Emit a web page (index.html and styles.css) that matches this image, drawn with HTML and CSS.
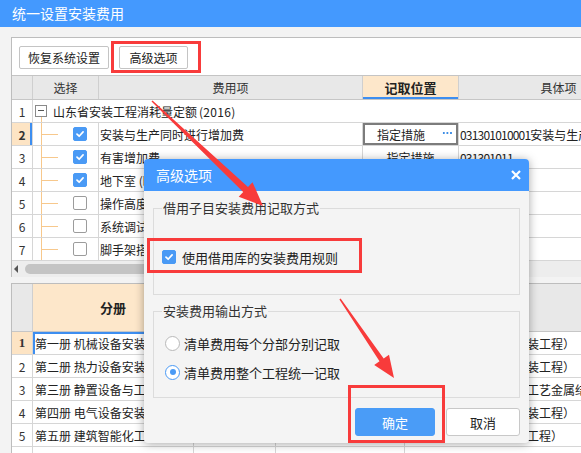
FILE: index.html
```html
<!DOCTYPE html>
<html lang="zh-CN">
<head>
<meta charset="utf-8">
<title>统一设置安装费用</title>
<link rel="stylesheet" href="styles.css">
</head>
<body>
<div class="window">
  <div class="titlebar">统一设置安装费用</div>
  <div class="content">
    <section class="panel">
      <div class="toolbar">
        <button class="btn btn-reset">恢复系统设置</button>
        <button class="btn btn-adv">高级选项</button>
      </div>
      <div class="upper">
        <div class="row head">
          <div class="cell num"></div>
          <div class="cell">选择</div>
          <div class="cell">费用项</div>
          <div class="cell active-head">记取位置</div>
          <div class="cell">具体项</div>
        </div>
        <div class="row">
          <div class="cell num">1</div>
          <div class="cell span"><span class="toggle"></span>山东省安装工程消耗量定额<span class="year">(2016)</span></div>
        </div>
        <div class="row">
          <div class="cell num cur">2</div>
          <div class="cell tree"><span class="chk on"><svg viewBox="0 0 14 14"><polyline points="3.5,7.2 6,9.6 10.6,4.6"/></svg></span></div>
          <div class="cell name">安装与生产同时进行增加费</div>
          <div class="cell pos editing"><span class="pos-text">指定措施</span><span class="dots"></span></div>
          <div class="cell code"><span class="digits">031301010001</span>安装与生产同时进行增加费</div>
        </div>
        <div class="row">
          <div class="cell num">3</div>
          <div class="cell tree"><span class="chk on"><svg viewBox="0 0 14 14"><polyline points="3.5,7.2 6,9.6 10.6,4.6"/></svg></span></div>
          <div class="cell name">有害增加费</div>
          <div class="cell pos center">指定措施</div>
          <div class="cell code"><span class="digits">031301011</span></div>
        </div>
        <div class="row">
          <div class="cell num">4</div>
          <div class="cell tree"><span class="chk on"><svg viewBox="0 0 14 14"><polyline points="3.5,7.2 6,9.6 10.6,4.6"/></svg></span></div>
          <div class="cell name">地下室 (暗室) 施工增加费</div>
          <div class="cell pos center">指定措施</div>
          <div class="cell code"><span class="digits">031301012</span></div>
        </div>
        <div class="row">
          <div class="cell num">5</div>
          <div class="cell tree"><span class="chk"></span></div>
          <div class="cell name">操作高度增加费</div>
          <div class="cell pos center"></div>
          <div class="cell code"></div>
        </div>
        <div class="row">
          <div class="cell num">6</div>
          <div class="cell tree"><span class="chk"></span></div>
          <div class="cell name">系统调试费</div>
          <div class="cell pos center"></div>
          <div class="cell code"></div>
        </div>
        <div class="row">
          <div class="cell num">7</div>
          <div class="cell tree"><span class="chk"></span></div>
          <div class="cell name">脚手架搭拆费</div>
          <div class="cell pos center"></div>
          <div class="cell code"></div>
        </div>
      </div>
      <div class="hscroll">
        <span class="arrow-left"></span>
        <span class="thumb"></span>
      </div>
    </section>

    <section class="lower">
      <div class="row head">
        <div class="cell num"></div>
        <div class="cell active-head2">分册</div>
        <div class="cell"></div>
        <div class="cell"></div>
        <div class="cell"></div>
      </div>
      <div class="row">
        <div class="cell num cur2">1</div>
        <div class="cell book selected">第一册 机械设备安装工程</div>
        <div class="cell"></div>
        <div class="cell"></div>
        <div class="cell book2">安装工程（机械设备安装工程）</div>
      </div>
      <div class="row">
        <div class="cell num">2</div>
        <div class="cell book">第二册 热力设备安装工程</div>
        <div class="cell"></div>
        <div class="cell"></div>
        <div class="cell book2">安装工程（热力设备安装工程）</div>
      </div>
      <div class="row">
        <div class="cell num">3</div>
        <div class="cell book">第三册 静置设备与工艺金属结构制作安装工程</div>
        <div class="cell"></div>
        <div class="cell"></div>
        <div class="cell book2">安装工程（静置设备与工艺金属结构制作安装工程）</div>
      </div>
      <div class="row">
        <div class="cell num">4</div>
        <div class="cell book">第四册 电气设备安装工程</div>
        <div class="cell"></div>
        <div class="cell"></div>
        <div class="cell book2">安装工程（电气设备安装工程）</div>
      </div>
      <div class="row">
        <div class="cell num">5</div>
        <div class="cell book">第五册 建筑智能化工程</div>
        <div class="cell"></div>
        <div class="cell"></div>
        <div class="cell book2">安装工程（建筑智能化工程）</div>
      </div>
      <div class="row">
        <div class="cell num"></div>
        <div class="cell"></div>
        <div class="cell"></div>
        <div class="cell"></div>
        <div class="cell"></div>
      </div>
    </section>
  </div>

  <div class="dialog">
    <div class="dlg-head">
      <span>高级选项</span>
      <svg class="close" viewBox="0 0 10 10"><path d="M1 1L9 9M9 1L1 9"/></svg>
    </div>
    <div class="dlg-body">
      <fieldset class="group g1">
        <legend>借用子目安装费用记取方式</legend>
        <label class="opt opt-chk"><span class="chk on"><svg viewBox="0 0 14 14"><polyline points="3.5,7.2 6,9.6 10.6,4.6"/></svg></span>使用借用库的安装费用规则</label>
      </fieldset>
      <fieldset class="group g2">
        <legend>安装费用输出方式</legend>
        <label class="opt opt-r1"><span class="radio"></span>清单费用每个分部分别记取</label>
        <label class="opt opt-r2"><span class="radio on"></span>清单费用整个工程统一记取</label>
      </fieldset>
      <div class="actions">
        <button class="dbtn ok">确定</button>
        <button class="dbtn cancel">取消</button>
      </div>
    </div>
  </div>

  <svg class="annot" viewBox="0 0 581 453" width="581" height="453">
    <g fill="none" stroke="#f83b3b" stroke-width="3">
      <rect x="112.5" y="42.5" width="87" height="29"/>
      <rect x="148.5" y="239.5" width="212" height="32"/>
      <rect x="349.5" y="386.5" width="94" height="55"/>
    </g>
    <g fill="#f83b3b">
      <polygon points="152.5,100.4 248,187 252.5,182.2 263,206 238.7,196.8 243.2,192 151.5,101.6"/>
      <polygon points="340.6,298.6 383.7,358.4 389,354.8 394,378 374.2,364.9 379.5,361.3 339.4,299.4"/>
    </g>
  </svg>
</div>
</body>
</html>
```

FILE: styles.css
```css
* { box-sizing: border-box; }
html, body { margin: 0; padding: 0; }
body {
  width: 581px;
  height: 453px;
  overflow: hidden;
  background: #f3f3f3;
  font-family: "Noto Sans CJK SC", "Noto Sans", sans-serif;
  font-size: 12px;
  color: #222;
}
.window { position: relative; width: 581px; height: 453px; }

.titlebar {
  height: 27px;
  background: #4499fe;
  color: #fff;
  font-size: 14px;
  line-height: 27px;
  padding-left: 12px;
}
.content { padding: 10px 0 0 11px; }

.panel {
  background: #fff;
  border-top: 1px solid #bdbdbd;
  border-left: 1px solid #bdbdbd;
  overflow: hidden;
}
.toolbar {
  height: 38px;
  border-bottom: 1px solid #c4c4c4;
  display: flex;
  align-items: flex-start;
  gap: 10px;
  padding: 8px 0 0 7px;
}
.btn {
  height: 23px;
  padding: 0;
  border: 1px solid #c4c4c4;
  border-radius: 2px;
  background: #fff;
  font: inherit;
  font-size: 12px;
  color: #222;
}
.btn-reset { width: 90px; }
.btn-adv { width: 69px; }

.row { display: grid; height: 23px; border-bottom: 1px solid #d6d6d6; }
.upper .row { grid-template-columns: 21px 66px 264px 96px 200px; }
.cell {
  position: relative;
  display: flex;
  align-items: center;
  border-right: 1px solid #d6d6d6;
  overflow: hidden;
  white-space: nowrap;
}
.head { height: 24px; background: #e8e8e8; border-bottom-color: #c6c6c6; }
.head .cell { justify-content: center; border-right-color: #cfcfcf; color: #333; }
.active-head {
  background: #fde7ca;
  font-weight: bold;
  font-size: 13px;
  color: #222 !important;
  box-shadow: inset 0 -2px 0 #3d8ef0;
}
.num { justify-content: center; color: #333; }
.cur { background: #fde4c4; font-weight: bold; box-shadow: inset -2px 0 0 #3d8ef0; }
.span { grid-column: 2 / -1; border-right: none; padding-left: 2px; }
.year { margin-left: 2px; letter-spacing: 0.3px; }
.digits { letter-spacing: -0.8px; }
.toggle {
  position: relative;
  width: 12px;
  height: 12px;
  border: 1px solid #8a8a8a;
  margin-right: 6px;
  flex: none;
}
.toggle::before {
  content: "";
  position: absolute;
  left: 2px;
  right: 2px;
  top: 4px;
  height: 1px;
  background: #555;
}
.toggle::after {
  content: "";
  position: absolute;
  left: 5px;
  top: 11px;
  width: 1px;
  height: 7px;
  background: #f7c88c;
}
.tree { padding-left: 40px; }
.tree::before {
  content: "";
  position: absolute;
  left: 8px;
  top: 0;
  bottom: 0;
  width: 1px;
  background: #f7c88c;
}
.tree::after {
  content: "";
  position: absolute;
  left: 8px;
  top: 11px;
  width: 17px;
  height: 1px;
  background: #f7c88c;
}
.chk {
  display: inline-block;
  width: 14px;
  height: 14px;
  border: 1px solid #9c9c9c;
  border-radius: 2px;
  background: #fff;
  flex: none;
}
.chk.on { background: #4a9af5; border-color: #4a9af5; }
.chk svg { display: block; width: 12px; height: 12px; }
.chk polyline { fill: none; stroke: #fff; stroke-width: 2; stroke-linecap: round; stroke-linejoin: round; }
.name { padding-left: 1px; }
.pos.center { justify-content: center; }
.editing { box-shadow: inset 0 0 0 2px #7c7c7c; padding-left: 14px; }
.pos-text { flex: 1; }
.dots {
  width: 10px;
  height: 2px;
  margin-right: 6px;
  margin-top: -3px;
  background-image: radial-gradient(circle, #3e8ee6 0.9px, transparent 1.1px);
  background-size: 3.6px 2px;
}
.code { padding-left: 1px; }

.hscroll {
  height: 16px;
  background: #ededed;
  display: flex;
  align-items: center;
  padding-left: 2px;
}
.arrow-left {
  width: 0;
  height: 0;
  border-top: 4px solid transparent;
  border-bottom: 4px solid transparent;
  border-right: 4px solid #555;
  margin-right: 7px;
}
.thumb { width: 458px; height: 10px; border-radius: 5px; background: #c4c4c4; }

.lower {
  margin-top: 6px;
  background: #fff;
  border-top: 1px solid #bdbdbd;
  border-left: 1px solid #bdbdbd;
  overflow: hidden;
  height: 170px;
}
.lower .row { grid-template-columns: 21px 161px 82px 129px 250px; }
.lower .head { height: 48px; }
.active-head2 { background: #fde7ca; font-weight: bold; font-size: 13px; color: #222 !important; }
.cur2 { background: #fde4c4; font-weight: bold; font-family: "Liberation Serif", serif; font-size: 13px; }
.book { padding-left: 2px; }
.book2 { padding-left: 2px; }
.selected { box-shadow: inset 2px 2px 0 #3d8ef0; }

.dialog {
  position: absolute;
  left: 144px;
  top: 159px;
  width: 385px;
  height: 284px;
  background: #f4f4f4;
  border-radius: 4px;
  box-shadow: 0 1px 10px rgba(0, 0, 0, 0.35);
  display: flex;
  flex-direction: column;
  overflow: hidden;
}
.dlg-head {
  height: 32px;
  flex: none;
  background: #4499fe;
  color: #fff;
  font-size: 14px;
  display: flex;
  align-items: center;
  justify-content: space-between;
  padding: 0 8px 0 12px;
}
.close { width: 10px; height: 10px; }
.close path { stroke: #fff; stroke-width: 2.2; fill: none; }
.dlg-body { flex: 1; padding: 8px 9px 0; display: flex; flex-direction: column; }
.group {
  margin: 0;
  height: 96px;
  border: 1px solid #dcdcdc;
  padding: 0 8px;
  min-width: 0;
}
.g2 { margin-top: 7px; }
.group legend {
  padding: 0 1px;
  font-size: 13px;
  line-height: 18px;
  color: #333;
}
.opt {
  display: flex;
  align-items: center;
  height: 20px;
  font-size: 13px;
  color: #222;
  gap: 6px;
}
.opt-chk { margin-top: 30px; }
.opt-r1 { margin-top: 13px; }
.opt-r2 { margin-top: 9px; }
.radio {
  position: relative;
  width: 15px;
  height: 15px;
  border: 1px solid #b9b9b9;
  border-radius: 50%;
  background: #fff;
  flex: none;
  margin-left: 3px;
  margin-right: -2px;
}
.radio.on { border-color: #4a9af5; }
.radio.on::after {
  content: "";
  position: absolute;
  left: 3.5px;
  top: 3.5px;
  width: 6px;
  height: 6px;
  border-radius: 50%;
  background: #4a9af5;
}
.actions { display: flex; justify-content: flex-end; gap: 11px; margin-top: 10px; }
.dbtn {
  height: 28px;
  border-radius: 3px;
  font: inherit;
  font-size: 13px;
  padding: 0;
}
.ok { width: 80px; background: #4a9cf7; border: 1px solid #4a9cf7; color: #fff; }
.cancel { width: 74px; background: #fff; border: 1px solid #c8c8c8; color: #222; }

.annot { position: absolute; left: 0; top: 0; pointer-events: none; }
```
